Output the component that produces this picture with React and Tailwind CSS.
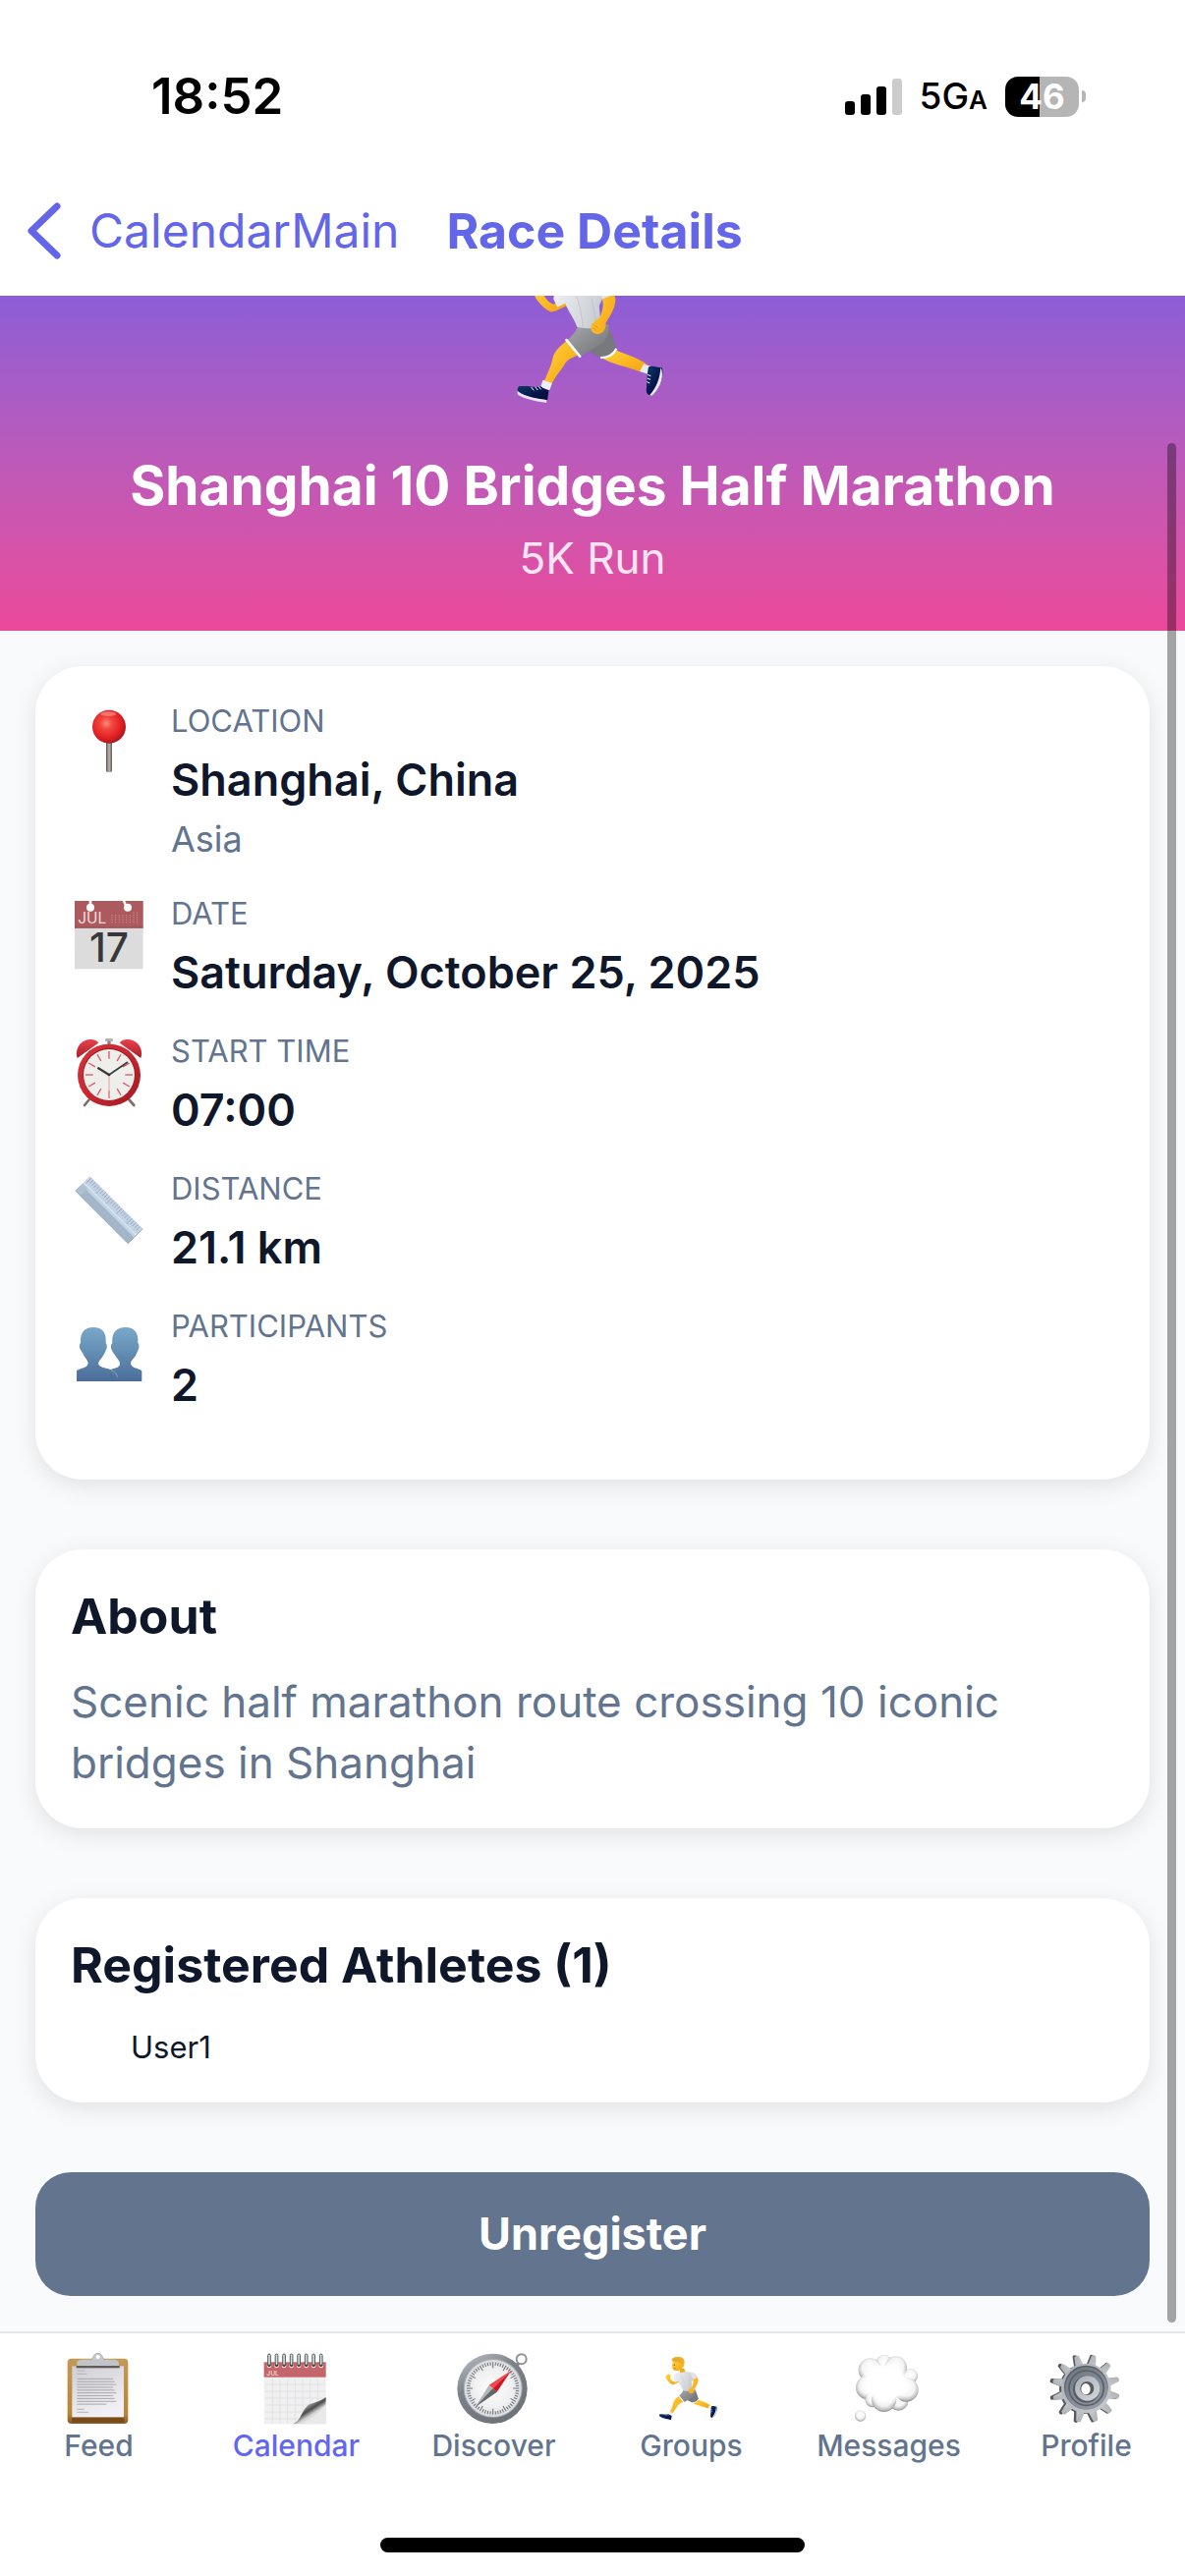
import { useId } from "react";

const range = (n) => Array.from({ length: n }, (_, i) => i);

function Runner(props) {
  const id = useId().replace(/[^a-zA-Z0-9]/g, "");
  const skin = `skin${id}`;
  const shirt = `shirt${id}`;
  const shorts = `shorts${id}`;
  const shoe = `shoe${id}`;
  return (
    <svg viewBox="132 -131 466 493" aria-hidden="true" {...props}>
      <defs>
        <linearGradient id={skin} x1="0" y1="0" x2="1" y2="1">
          <stop offset="0" stopColor="#ffd43a" />
          <stop offset="1" stopColor="#f5a012" />
        </linearGradient>
        <linearGradient id={shirt} x1="0" y1="0" x2="1" y2="0.3">
          <stop offset="0" stopColor="#f1f3f6" />
          <stop offset="1" stopColor="#c9ccd2" />
        </linearGradient>
        <linearGradient id={shorts} x1="0" y1="0" x2="1" y2="1">
          <stop offset="0" stopColor="#a7a9ac" />
          <stop offset="1" stopColor="#6f7275" />
        </linearGradient>
        <linearGradient id={shoe} x1="0" y1="0" x2="1" y2="1">
          <stop offset="0" stopColor="#0b3a63" />
          <stop offset="0.6" stopColor="#06124a" />
          <stop offset="1" stopColor="#040b30" />
        </linearGradient>
      </defs>
      <path d="M388 222 C420 245 470 250 512 268 L530 244 C500 224 465 214 432 200 Z" fill={`url(#${skin})`} />
      <path d="M508 266 L520 243 L541 250 L532 274 Z" fill="#e9ebf0" />
      <path d="M535 252 C548 246 560 254 576 254 C583 276 572 314 548 338 C538 342 529 336 528 326 C530 302 530 272 535 252 Z" fill={`url(#${shoe})`} />
      <path d="M572 254 C584 276 574 314 546 340 L538 339 C560 314 570 288 572 254 Z" fill="#e8ebf3" />
      <path d="M532 276 l10 4 M531 287 l10 4 M530 298 l9 4" stroke="#fff" strokeWidth="3" />
      <path d="M352 205 L392 225 C412 222 428 210 438 198 L414 130 Z" fill="#77797c" />
      <path d="M388 224 C410 224 428 214 437 196" fill="none" stroke="#fff" strokeWidth="7" />
      <path d="M285 172 C262 190 246 206 241 228 C236 255 222 278 214 300 L238 306 C250 280 270 260 282 238 C292 226 306 222 318 216 Z" fill={`url(#${skin})`} />
      <path d="M212 292 L240 302 L232 324 L204 314 Z" fill="#eceef2" />
      <path d="M206 312 C214 320 224 322 230 324 L225 357 C200 352 170 346 146 336 C134 330 130 322 138 312 C160 308 190 316 206 312 Z" fill={`url(#${shoe})`} />
      <path d="M134 326 C160 346 196 348 225 354 L222 362 C190 358 152 350 134 336 Z" fill="#e9e4f6" />
      <path d="M176 314 l8 10 M188 313 l8 10 M199 312 l7 9" stroke="#fff" strokeWidth="3" />
      <path d="M318 128 L412 122 C416 148 408 166 392 180 C366 196 344 208 324 222 L284 172 C300 158 312 146 318 128 Z" fill={`url(#${shorts})`} />
      <path d="M284 170 L325 220" stroke="#fff" strokeWidth="8" strokeLinecap="round" />
      <path d="M272 42 C258 54 248 62 242 60 C230 56 222 44 216 36 L222 12 C218 0 196 2 186 16 C182 30 190 44 198 52 C208 66 222 78 236 84 C250 84 266 74 286 64 Z" fill={`url(#${skin})`} />
      <path d="M250 10 C266 -12 296 -20 330 -18 C366 -16 396 -4 404 20 L384 66 L390 128 C366 136 338 136 316 130 C306 102 290 84 280 58 L256 70 L244 44 Z" fill={`url(#${shirt})`} />
      <path d="M300 10 C320 40 330 80 334 130 M360 40 C366 70 372 96 376 124" fill="none" stroke="#b6bac1" strokeWidth="3" opacity="0.6" />
      <path d="M386 -6 C410 -4 432 24 434 48 C432 76 416 98 404 118 C406 136 396 152 378 152 C362 150 354 138 362 120 C370 110 380 108 386 100 C394 82 398 64 394 48 Z" fill={`url(#${skin})`} />
      <path d="M366 -14 C400 -12 420 4 430 30 L394 44 Z" fill="#dfe2e7" />
      <path d="M362 132 l14 8 M366 124 l14 8" stroke="#e08a0c" strokeWidth="2" />
      <path d="M288 -36 L324 -40 L334 -14 L296 -8 Z" fill="#f0a91b" />
      <path d="M238 -92 C232 -70 230 -54 238 -36 C248 -20 276 -18 296 -28 C318 -42 324 -64 318 -92 Z" fill={`url(#${skin})`} />
      <path d="M228 -100 C232 -124 262 -134 288 -130 C318 -126 332 -104 328 -78 C326 -60 320 -50 312 -44 C308 -56 304 -70 294 -76 C276 -84 252 -84 228 -100 Z" fill="#efb632" />
      <path d="M236 -108 C262 -120 290 -118 318 -100 M246 -100 C272 -106 296 -100 316 -80" fill="none" stroke="#cf8d17" strokeWidth="4" />
      <circle cx="250" cy="-68" r="5" fill="#4a2c0c" />
      <path d="M242 -42 q10 6 20 0" fill="none" stroke="#a4540d" strokeWidth="4" />
      <circle cx="302" cy="-60" r="8" fill="#f6b62a" />
    </svg>
  );
}

function Pin() {
  return (
    <svg viewBox="0 0 210 210" className="size-[70px]" aria-hidden="true">
      <defs>
        <radialGradient id="pinHead" cx="0.42" cy="0.4" r="0.62">
          <stop offset="0" stopColor="#ff8a78" />
          <stop offset="0.3" stopColor="#f2443c" />
          <stop offset="0.72" stopColor="#e31f23" />
          <stop offset="1" stopColor="#a31a20" />
        </radialGradient>
        <linearGradient id="pinShaft">
          <stop offset="0" stopColor="#55504d" />
          <stop offset="0.5" stopColor="#c0b9b4" />
          <stop offset="1" stopColor="#5f5955" />
        </linearGradient>
      </defs>
      <rect x="96" y="98" width="18" height="97" rx="5" fill="url(#pinShaft)" />
      <circle cx="105" cy="56" r="51" fill="url(#pinHead)" />
      <ellipse cx="103" cy="17" rx="24" ry="7" fill="#ffb3a5" opacity="0.5" />
    </svg>
  );
}

function DateCalendar() {
  return (
    <svg viewBox="0 0 210 210" className="size-[70px] overflow-visible" aria-hidden="true">
      <rect x="0" y="0" width="209" height="208" rx="2" fill="#dcdcdd" />
      <rect x="0" y="0" width="209" height="82" fill="#ad5a5e" />
      <rect x="0" y="80" width="209" height="3" fill="#8f4347" />
      <circle cx="48" cy="20" r="12" fill="#fff" />
      <path d="M44 0 h8 v14 h-8 Z" fill="#fff" />
      <circle cx="162" cy="20" r="12" fill="#fff" />
      <path d="M146 0 h8 l6 14 -6 4 Z" fill="#fff" />
      <text x="10" y="70" fontSize="46" fill="#f4dede" fontFamily="Inter, sans-serif">JUL</text>
      {range(8).map((c) => (
        <path key={c} d={`M${114 + c * 11} ${c > 5 ? 34 : 42} V70`} stroke="#c98d90" strokeWidth="3" strokeDasharray="4 3" />
      ))}
      <text x="105" y="187" textAnchor="middle" fontSize="122" fontWeight="500" fill="#38383a" fontFamily="Inter, sans-serif">17</text>
    </svg>
  );
}

function AlarmClock() {
  return (
    <svg viewBox="0 0 210 210" className="size-[70px]" aria-hidden="true">
      <defs>
        <linearGradient id="bell" x1="0" y1="0" x2="0" y2="1">
          <stop offset="0" stopColor="#e8424c" />
          <stop offset="1" stopColor="#a91d27" />
        </linearGradient>
        <linearGradient id="clockRim" x1="0" y1="0" x2="1" y2="1">
          <stop offset="0" stopColor="#d6343b" />
          <stop offset="0.5" stopColor="#c9262f" />
          <stop offset="1" stopColor="#a01822" />
        </linearGradient>
      </defs>
      <rect x="93" y="0" width="24" height="9" rx="3" fill="#b9b3b0" />
      <path d="M100 8 h10 v12 h-10 Z" fill="#8a8583" />
      <path d="M50 180 L30 204 M160 180 L181 204" stroke="#77716e" strokeWidth="8" strokeLinecap="round" />
      <path d="M36 52 L50 38 M172 50 L160 38" stroke="#8d8784" strokeWidth="8" />
      <path d="M8 60 C-2 30 22 -2 56 4 C66 6 72 10 72 14 Z" fill="url(#bell)" />
      <path d="M202 60 C212 30 188 -2 154 4 C144 6 138 10 138 14 Z" fill="url(#bell)" />
      <ellipse cx="105" cy="112" rx="96" ry="95" fill="url(#clockRim)" />
      <circle cx="105" cy="110" r="80" fill="#8f1620" />
      <circle cx="105" cy="111" r="78" fill="#eeeeea" />
      {range(12).map((i) => (
        <path key={i} d="M105 39 V62" transform={`rotate(${i * 30} 105 111)`} stroke="#e0566a" strokeWidth="4" />
      ))}
      <path d="M105 111 V184" stroke="#e8a09a" strokeWidth="3" />
      <path d="M105 111 L70 89" stroke="#3c3c3c" strokeWidth="7" />
      <path d="M105 111 L162 72" stroke="#3c3c3c" strokeWidth="5" />
      <circle cx="105" cy="111" r="4" fill="#333" />
    </svg>
  );
}

function Ruler() {
  return (
    <svg viewBox="0 0 210 210" className="size-[70px]" aria-hidden="true">
      <path d="M2 45 L46 1 L208 161 L163 206 Z" fill="#c3d3e6" />
      <path d="M2 45 L20 27 L182 188 L163 206 Z" fill="#a3b6ca" />
      <path d="M2 45 L24 23 L40 38 L17 60 Z" fill="#b0c0d2" />
      <path d="M28 20 L188 181" stroke="#d8e4f1" strokeWidth="4" />
      {range(25).map((i) => {
        const d = i * 6.2;
        const len = i % 5 === 0 ? 17 : 11;
        return <path key={i} d={`M${51 + d} ${6 + d} l${-len} ${len}`} stroke="#7d90a8" strokeWidth="2" />;
      })}
      <path d="M2 45 L163 206 L208 161" fill="none" stroke="#8497ae" strokeWidth="2" />
    </svg>
  );
}

function People() {
  return (
    <svg viewBox="0 0 210 210" className="size-[70px]" aria-hidden="true">
      <defs>
        <linearGradient id="bust" x1="0" y1="42" x2="0" y2="207" gradientUnits="userSpaceOnUse">
          <stop offset="0" stopColor="#79a8c9" />
          <stop offset="0.55" stopColor="#6088ae" />
          <stop offset="1" stopColor="#4a6d98" />
        </linearGradient>
      </defs>
      <path d="M102 207 V174 C118 166 134 168 138 156 C140 146 130 138 124 128 C118 120 112 112 111 104 C110 96 112 94 115 90 C112 58 128 42 155 42 C182 42 196 58 193 90 C197 94 197 98 196 104 C194 112 190 120 186 128 C180 138 168 146 172 156 C178 168 194 166 205 175 V207 Z" fill="url(#bust)" />
      <path d="M6 207 V175 C16 166 34 168 40 156 C44 146 34 138 28 128 C24 118 18 112 15 104 C14 98 15 94 18 90 C16 58 30 42 57 42 C84 42 98 58 95 90 C98 94 99 98 98 104 C96 112 92 120 87 128 C82 138 70 146 73 156 C82 168 104 166 116 174 C126 180 130 190 130 207 Z" fill="url(#bust)" />
      <path d="M110 172 C122 178 128 184 131 194" fill="none" stroke="#86a9c8" strokeWidth="3" />
    </svg>
  );
}

function Clipboard() {
  return (
    <svg viewBox="0 0 216 216" className="size-[72px] overflow-visible" aria-hidden="true">
      <defs>
        <linearGradient id="board" x1="0" y1="0" x2="0" y2="1">
          <stop offset="0" stopColor="#c39a53" />
          <stop offset="0.85" stopColor="#b78638" />
          <stop offset="1" stopColor="#8a5a22" />
        </linearGradient>
        <linearGradient id="paper" x1="0" y1="0" x2="0.4" y2="1">
          <stop offset="0" stopColor="#cfcfd2" />
          <stop offset="1" stopColor="#f0f0f6" />
        </linearGradient>
      </defs>
      <rect x="11" y="17" width="185" height="199" rx="12" fill="url(#board)" />
      <rect x="24" y="196" width="160" height="16" fill="#7a4a1b" />
      <rect x="25" y="40" width="158" height="156" fill="url(#paper)" />
      <path d="M40 44 V30 C40 22 48 20 58 20 H150 C162 20 168 24 168 32 V44 Z" fill="#c2c4c8" />
      <rect x="38" y="39" width="132" height="7" fill="#5f5c59" />
      <path d="M82 22 C90 20 88 2 104 1 C120 2 118 20 126 22 Z" fill="#c5c8cd" />
      <circle cx="104" cy="12" r="6" fill="#fff" />
      <path d="M82 22 C90 20 88 2 104 1 C120 2 118 20 126 22" fill="none" stroke="#94989e" strokeWidth="2" />
      <path d="M40 54 H64 M40 64 H70" stroke="#a3a3a6" strokeWidth="2" />
      {range(10).map((i) => (
        <path key={i} d={`M40 ${79 + i * 8.6} H${i === 9 ? 130 : 150 + (i % 3) * 5}`} stroke="#98989c" strokeWidth="2.4" />
      ))}
      <path d="M40 172 H62 M40 181 H76" stroke="#9a9a9e" strokeWidth="2" />
    </svg>
  );
}

function SpiralCalendar() {
  return (
    <svg viewBox="0 0 216 216" className="size-[72px] overflow-visible" aria-hidden="true">
      <defs>
        <linearGradient id="curl" x1="0.2" y1="0.1" x2="0.75" y2="0.8">
          <stop offset="0" stopColor="#f4f4f4" />
          <stop offset="0.35" stopColor="#9a9a9a" />
          <stop offset="0.55" stopColor="#4b4b4b" />
          <stop offset="0.75" stopColor="#d6d6d6" />
          <stop offset="1" stopColor="#efefef" />
        </linearGradient>
      </defs>
      <rect x="8" y="28" width="189" height="189" fill="#f0f0f1" />
      <rect x="8" y="28" width="189" height="46" fill="#c4656b" />
      {range(7).map((i) => (
        <path key={i} d={`M${34 + i * 23} 80 V216`} stroke="#e2e2e4" strokeWidth="3" />
      ))}
      {range(6).map((i) => (
        <path key={i} d={`M12 ${96 + i * 21} H194`} stroke="#e2e2e4" strokeWidth="3" />
      ))}
      <path d="M96 217 C122 206 122 176 144 158 C164 150 184 146 197 134 V217 Z" fill="url(#curl)" />
      <path d="M120 217 C150 206 176 184 197 156 V217 Z" fill="#e9e9ea" />
      <text x="16" y="69" fontSize="20" fill="#f6dcdd" fontFamily="Inter, sans-serif">JUL</text>
      {range(8).map((i) => (
        <g key={i}>
          <circle cx={24 + i * 22.6} cy="39" r="7" fill="#f2dada" />
          <circle cx={24 + i * 22.6} cy="37" r="5" fill="#3d2a2a" />
          <rect x={20 + i * 22.6} y="3" width="8" height="34" rx="4" fill="#d9dede" stroke="#4a5c58" strokeWidth="3" />
        </g>
      ))}
    </svg>
  );
}

function Compass() {
  return (
    <svg viewBox="0 0 216 216" className="size-[72px] overflow-visible" aria-hidden="true">
      <defs>
        <linearGradient id="compassRim" x1="0.2" y1="0" x2="0.8" y2="1">
          <stop offset="0" stopColor="#b4b8bf" />
          <stop offset="0.35" stopColor="#7d828a" />
          <stop offset="1" stopColor="#6c7077" />
        </linearGradient>
        <radialGradient id="compassFace">
          <stop offset="0" stopColor="#ffffff" />
          <stop offset="0.7" stopColor="#efeff1" />
          <stop offset="1" stopColor="#dadbde" />
        </radialGradient>
      </defs>
      <circle cx="191" cy="19" r="15" fill="none" stroke="#8f9399" strokeWidth="6" />
      <path d="M172 44 L182 32" stroke="#7d8188" strokeWidth="10" />
      <circle cx="102" cy="109" r="107" fill="url(#compassRim)" />
      <circle cx="104" cy="107" r="90" fill="#a7abb1" />
      <circle cx="104" cy="108" r="87" fill="url(#compassFace)" />
      {range(60).map((i) => (
        <path key={i} d={i % 5 === 0 ? "M104 28 V46" : "M104 28 V38"} transform={`rotate(${i * 6} 104 108)`} stroke="#6a6d72" strokeWidth="3" />
      ))}
      <path d="M50 165 L92 98 L116 119 Z" fill="#b4b6ba" />
      <path d="M50 165 L104 108 L116 119 Z" fill="#63666b" />
      <path d="M160 53 L92 98 L104 108 Z" fill="#f0484c" />
      <path d="M160 53 L104 108 L116 119 Z" fill="#cf1422" />
    </svg>
  );
}

function GroupsIcon() {
  return (
    <svg viewBox="0 0 216 216" className="size-[72px]" aria-hidden="true">
      <Runner x="8" y="11" width="185" height="196" />
    </svg>
  );
}

function ThoughtCloud() {
  const puffs = [
    [173, 70, 22], [92, 30, 24], [128, 44, 34], [50, 52, 36], [42, 106, 36], [58, 142, 24],
    [136, 146, 30], [160, 112, 37], [92, 142, 38],
  ];
  return (
    <svg viewBox="0 0 216 216" className="size-[72px] overflow-visible" aria-hidden="true">
      <defs>
        <radialGradient id="puff" cx="0.5" cy="0.42" r="0.58">
          <stop offset="0" stopColor="#ffffff" />
          <stop offset="0.6" stopColor="#f3f3f4" />
          <stop offset="0.85" stopColor="#c2c2c4" />
          <stop offset="1" stopColor="#8c8c8f" />
        </radialGradient>
        <radialGradient id="cloudCore">
          <stop offset="0.7" stopColor="#ffffff" />
          <stop offset="1" stopColor="#ffffff" stopOpacity="0" />
        </radialGradient>
      </defs>
      {puffs.map(([x, y, r]) => (
        <circle key={`${x}-${y}`} cx={x} cy={y} r={r} fill="url(#puff)" />
      ))}
      <ellipse cx="98" cy="90" rx="80" ry="68" fill="url(#cloudCore)" />
      <circle cx="20" cy="192" r="17" fill="url(#puff)" />
    </svg>
  );
}

function Gear() {
  return (
    <svg viewBox="0 0 216 216" className="size-[72px] overflow-visible" aria-hidden="true">
      <defs>
        <linearGradient id="gearFace" x1="0" y1="0" x2="1" y2="1">
          <stop offset="0" stopColor="#a9adb1" />
          <stop offset="1" stopColor="#c9cbce" />
        </linearGradient>
        <linearGradient id="gearDish" x1="0" y1="0" x2="0.6" y2="1">
          <stop offset="0" stopColor="#6d747d" />
          <stop offset="1" stopColor="#9299a2" />
        </linearGradient>
        <linearGradient id="gearHub" x1="0" y1="0" x2="1" y2="1">
          <stop offset="0" stopColor="#a9afb8" />
          <stop offset="1" stopColor="#d5d7da" />
        </linearGradient>
      </defs>
      {range(12).map((i) => (
        <path key={i} d="M89 36 L93 5 Q98 0 105 5 L111 36 Z" transform={`rotate(${i * 30 + 14} 99 109)`} fill="#55585c" />
      ))}
      <circle cx="100" cy="110" r="76" fill="#55585c" />
      {range(12).map((i) => (
        <path key={i} d="M93 40 L98 7 Q105 2 112 7 L119 40 Z" transform={`rotate(${i * 30 + 14} 106 109)`} fill="url(#gearFace)" />
      ))}
      <circle cx="106" cy="108" r="76" fill="url(#gearFace)" />
      <circle cx="106" cy="105" r="67" fill="#596069" />
      <circle cx="107" cy="108" r="65" fill="url(#gearDish)" />
      <circle cx="107" cy="107" r="53" fill="none" stroke="#59606a" strokeWidth="5" />
      <circle cx="107" cy="111" r="41" fill="#555b64" />
      <circle cx="110" cy="108" r="38" fill="url(#gearHub)" />
      <circle cx="109" cy="108" r="21" fill="#575c63" />
      <ellipse cx="105" cy="110" rx="14" ry="17" fill="#ffffff" />
    </svg>
  );
}

const details = [
  { label: "LOCATION", value: "Shanghai, China", note: "Asia", Icon: Pin },
  { label: "DATE", value: "Saturday, October 25, 2025", Icon: DateCalendar },
  { label: "START TIME", value: "07:00", Icon: AlarmClock },
  { label: "DISTANCE", value: "21.1 km", Icon: Ruler },
  { label: "PARTICIPANTS", value: "2", Icon: People },
];

const tabs = [
  { label: "Feed", Icon: Clipboard },
  { label: "Calendar", Icon: SpiralCalendar, active: true },
  { label: "Discover", Icon: Compass },
  { label: "Groups", Icon: GroupsIcon },
  { label: "Messages", Icon: ThoughtCloud },
  { label: "Profile", Icon: Gear },
];

function StatusBar() {
  return (
    <div className="flex items-center justify-between pt-[68px] pr-[101px] pb-[52px] pl-[154px] text-black">
      <span className="text-[51px] leading-[60px] font-semibold">18:52</span>
      <div className="flex items-center">
        <svg viewBox="0 0 58 38" className="mr-[18px] h-[38px] w-[58px]" aria-label="Signal strength">
          <rect x="0" y="24" width="10" height="14" rx="3" />
          <rect x="16" y="17" width="10" height="21" rx="3" />
          <rect x="32" y="9" width="10" height="29" rx="3" />
          <rect x="48" y="1" width="10" height="37" rx="3" fill="#cccccc" />
        </svg>
        <span className="mr-[18px] text-[37px] leading-[60px] font-medium">
          5G<span className="text-[26px] leading-none font-semibold">A</span>
        </span>
        <div className="flex h-[41px] w-[75px] items-center justify-center rounded-[13px] bg-linear-to-r from-black from-47% to-[#b5b5b5] to-47% text-[35px] leading-[41px] font-bold text-white">
          46
        </div>
        <div className="ml-[3px] h-3 w-1 rounded-r-full bg-[#b5b5b5]" />
      </div>
    </div>
  );
}

function Card({ children }) {
  return (
    <section className="rounded-[48px] bg-white p-9 shadow-[0_6px_24px_rgba(0,0,0,0.1)]">{children}</section>
  );
}

export default function App() {
  return (
    <div className="flex min-h-screen flex-col bg-white font-['Inter',sans-serif] text-slate-900">
      <StatusBar />
      <header className="mb-[11px] flex h-[110px] items-center pl-[27px] text-[#6366e8]">
        <button type="button" className="flex items-center text-[48px] leading-[60px]">
          <svg viewBox="0 0 36 58" className="mr-[28px] h-[58px] w-9" fill="none" stroke="currentColor" strokeWidth="7" strokeLinecap="round" strokeLinejoin="round" aria-hidden="true">
            <path d="M31 4 L5 29 L31 54" />
          </svg>
          CalendarMain
        </button>
        <h1 className="ml-12 text-[50px] leading-[60px] font-bold">Race Details</h1>
      </header>

      <main className="relative grow bg-slate-50">
        <div className="flex flex-col items-center overflow-hidden bg-linear-to-b from-[#8d5dd6] to-[#ec4899] pb-11 text-white">
          <Runner className="-mt-[55px] h-[164px] w-[155px]" />
          <h2 className="mt-12 text-[55px] leading-[72px] font-bold">Shanghai 10 Bridges Half Marathon</h2>
          <p className="mt-2 text-[44px] leading-[60px] text-white/85">5K Run</p>
        </div>

        <div className="flex flex-col gap-[71px] p-9">
          <Card>
            {details.map(({ label, value, note, Icon }) => (
              <div key={label} className="flex items-start gap-6 pb-8">
                <div className="mt-[7px] flex w-[78px] justify-center">
                  <Icon />
                </div>
                <div>
                  <p className="text-[31px] leading-[40px] text-slate-500">{label}</p>
                  <p className="mt-3 text-[45px] leading-[56px] font-semibold">{value}</p>
                  {note && <p className="mt-2 text-[36px] leading-[48px] text-slate-500">{note}</p>}
                </div>
              </div>
            ))}
          </Card>

          <Card>
            <h3 className="text-[50px] leading-[64px] font-bold">About</h3>
            <p className="mt-6 text-[44px] leading-[62px] text-slate-500">
              Scenic half marathon route crossing 10 iconic bridges in Shanghai
            </p>
          </Card>

          <Card>
            <h3 className="text-[50px] leading-[64px] font-bold">Registered Athletes (1)</h3>
            <p className="mt-8 ml-[61px] text-[31px] leading-[40px]">User1</p>
          </Card>

          <button type="button" className="h-[126px] w-full rounded-[36px] bg-slate-500 text-[45px] leading-[56px] font-bold text-white">
            Unregister
          </button>
        </div>

        <div className="absolute top-[150px] right-[9px] bottom-[9px] w-[9px] rounded-full bg-black/35" />
      </main>

      <footer className="border-t-2 border-slate-200 bg-white pt-5 pb-6">
        <nav className="grid grid-cols-6">
          {tabs.map(({ label, Icon, active }) => (
            <a
              key={label}
              href={`#${label.toLowerCase()}`}
              aria-current={active ? "page" : undefined}
              className={`flex flex-col items-center gap-0.5 text-[30px] leading-[40px] font-medium ${active ? "text-[#6366f1]" : "text-slate-500"}`}
            >
              <Icon />
              {label}
            </a>
          ))}
        </nav>
        <div className="mx-auto mt-[74px] h-[15px] w-[432px] rounded-full bg-black" />
      </footer>
    </div>
  );
}
